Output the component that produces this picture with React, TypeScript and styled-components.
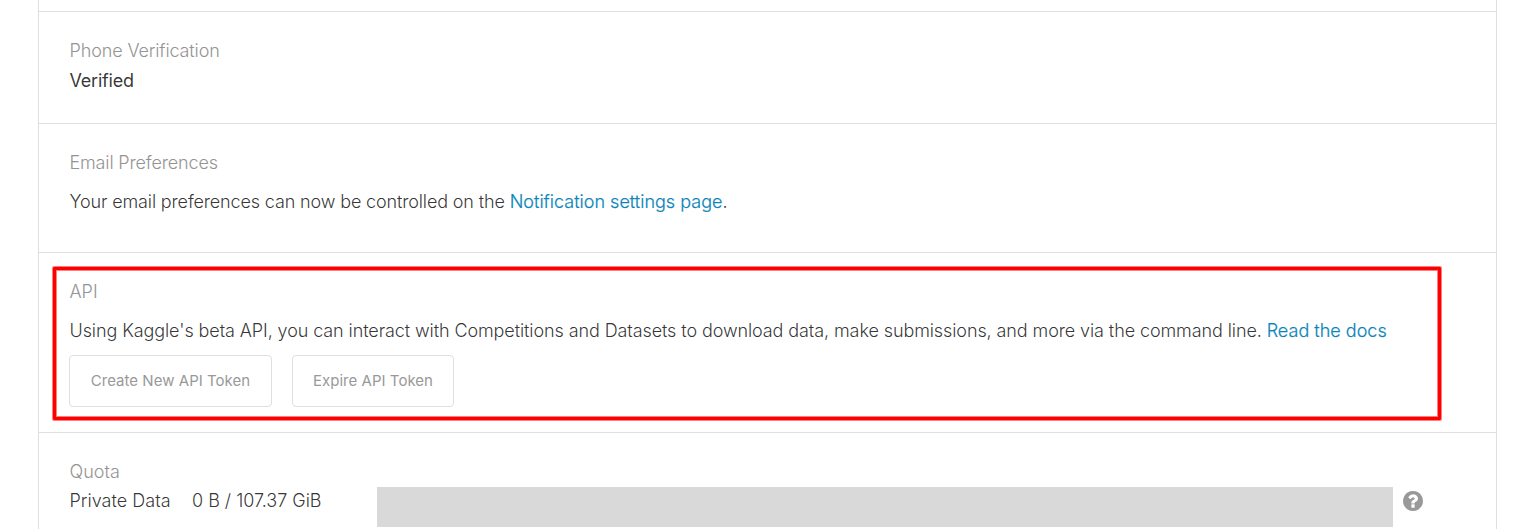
import React from "react";
import styled, { createGlobalStyle } from "styled-components";

const GlobalStyle = createGlobalStyle`
  * { box-sizing: border-box; }
  html, body { margin: 0; padding: 0; background: #fff; }
  body { height: 529px; overflow: hidden; font-family: Inter, "Liberation Sans", sans-serif; }
`;

const Panel = styled.main`
  width: 1459px;
  height: 529px;
  margin-left: 38px;
  padding-top: 11px;
  overflow: hidden;
  border: solid #dedfe0;
  border-width: 0 1px;
`;

const Section = styled.section<{ $height: number }>`
  position: relative;
  height: ${(p) => p.$height}px;
  padding: 26px 30px 0;
  border-top: 1px solid #dedfe0;
  font-size: 18px;
  font-weight: 300;
  color: rgba(0, 0, 0, 0.8);
`;

const Heading = styled.h2<{ $spacing?: number }>`
  margin: 0;
  padding-left: 0.5px;
  font-size: 18px;
  font-weight: 300;
  line-height: 26px;
  letter-spacing: ${(p) => p.$spacing ?? 0}px;
  color: #949494;
`;

const Text = styled.p<{ $gap: number; $weight?: number; $spacing?: number }>`
  width: max-content;
  margin: ${(p) => p.$gap}px 0 0;
  padding-left: 0.5px;
  line-height: 26px;
  white-space: nowrap;
  font-weight: ${(p) => p.$weight ?? 300};
  letter-spacing: ${(p) => p.$spacing ?? 0}px;
`;

const Link = styled.a`
  font-weight: 300;
  letter-spacing: 0.01px;
  color: #0a84b9;
  -webkit-text-stroke: 0.2px #0a84b9;
  text-decoration: none;
`;

const Buttons = styled.div`
  display: flex;
  gap: 20px;
  margin-top: 11px;
`;

const Button = styled.button<{ $width: number }>`
  width: ${(p) => p.$width}px;
  height: 52px;
  padding: 0 0 2px;
  border: 1px solid #dedfe0;
  border-radius: 4px;
  background: #fff;
  font: 400 15px Inter, "Liberation Sans", sans-serif;
  letter-spacing: 0.03px;
  color: #999;
  white-space: nowrap;
`;

const Highlight = styled.div`
  position: absolute;
  left: 14px;
  top: 14px;
  width: 1388px;
  height: 153px;
  border: 3px solid #f00;
  border-radius: 1px;
  box-shadow: 0 0 0 1px rgba(255, 0, 0, 0.5), inset 0 0 0 1px rgba(255, 0, 0, 0.5);
  pointer-events: none;
`;

const QuotaRow = styled.div`
  display: flex;
  align-items: flex-start;
  margin-top: 2px;
  line-height: 28px;
`;

const QuotaCell = styled.span<{ $width: number; $spacing?: number }>`
  flex: none;
  width: ${(p) => p.$width}px;
  padding-left: 0.4px;
  letter-spacing: ${(p) => p.$spacing ?? 0}px;
  white-space: nowrap;
`;

const QuotaBar = styled.div`
  flex: none;
  width: 1016px;
  height: 40px;
  margin-right: 10px;
  background: #d9d9d9;
`;

const HelpIcon = styled.svg`
  flex: none;
  width: 20px;
  height: 20px;
  margin-top: 4px;
  fill: #999;
`;

export default function App() {
  return (
    <>
      <GlobalStyle />
      <Panel>
        <Section $height={112}>
          <Heading $spacing={-0.13}>Phone Verification</Heading>
          <Text $gap={4} $weight={400} $spacing={-0.2}>Verified</Text>
        </Section>
        <Section $height={129}>
          <Heading $spacing={-0.15}>Email Preferences</Heading>
          <Text $gap={13} $spacing={-0.14}>
            Your email preferences can now be controlled on the <Link>Notification settings page</Link>.
          </Text>
        </Section>
        <Section $height={180}>
          <Heading>API</Heading>
          <Text $gap={13} $spacing={-0.097}>
            Using Kaggle's beta API, you can interact with Competitions and Datasets to download data, make
            submissions, and more via the command line. <Link>Read the docs</Link>
          </Text>
          <Buttons>
            <Button $width={203}>Create New API Token</Button>
            <Button $width={162}>Expire API Token</Button>
          </Buttons>
          <Highlight />
        </Section>
        <Section $height={140}>
          <Heading>Quota</Heading>
          <QuotaRow>
            <QuotaCell $width={122.6} $spacing={0.03}>Private Data</QuotaCell>
            <QuotaCell $width={185.4} $spacing={-0.02}>0 B / 107.37 GiB</QuotaCell>
            <QuotaBar />
            <HelpIcon viewBox="128 128 1536 1536" aria-label="Help">
              <path d="M1024 1376v-192q0-14-9-23t-23-9h-192q-14 0-23 9t-9 23v192q0 14 9 23t23 9h192q14 0 23-9t9-23zm256-672q0-88-55.500-163t-138.500-116-170-41q-243 0-371 213-15 24 8 42l132 100q7 6 19 6 16 0 25-12 53-68 86-92 34-24 86-24 48 0 85.500 26t37.500 59q0 38-20 61t-68 45q-63 28-115.500 86.500t-52.500 125.500v36q0 14 9 23t23 9h192q14 0 23-9t9-23q0-19 21.500-49.500t54.500-49.500q32-18 49-28.500t46-35 44.500-48 28-60.500 12.500-81zm384 192q0 209-103 385.500t-279.500 279.500-385.500 103-385.500-103-279.500-279.500-103-385.500 103-385.500 279.500-279.500 385.500-103 385.500 103 279.500 279.500 103 385.500z" />
            </HelpIcon>
          </QuotaRow>
        </Section>
      </Panel>
    </>
  );
}
